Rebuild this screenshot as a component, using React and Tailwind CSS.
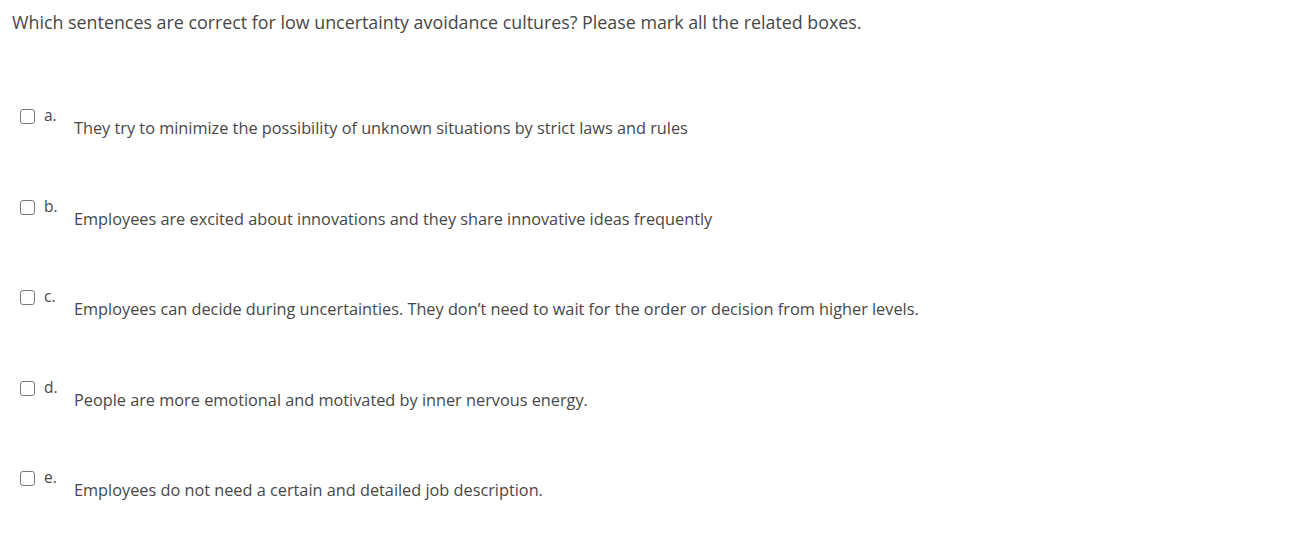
const options = [
  { key: "a.", text: "They try to minimize the possibility of unknown situations by strict laws and rules" },
  { key: "b.", text: "Employees are excited about innovations and they share innovative ideas frequently" },
  { key: "c.", text: "Employees can decide during uncertainties. They don’t need to wait for the order or decision from higher levels." },
  { key: "d.", text: "People are more emotional and motivated by inner nervous energy." },
  { key: "e.", text: "Employees do not need a certain and detailed job description." },
];

export default function App() {
  return (
    <div
      className="min-h-screen bg-white text-[#474747] pl-3 pt-[9px]"
      style={{ fontFamily: '"Open Sans", sans-serif' }}
    >
      <p className="text-[17.85px] leading-[26px]">
        Which sentences are correct for low uncertainty avoidance cultures? Please mark all the related boxes.
      </p>

      <div className="mt-[73px] flex flex-col gap-[64.5px] pl-[8px]">
        {options.map((o) => (
          <div key={o.key} className="flex items-start h-[26px]">
            <span className="mt-[1px] w-[15px] h-[15px] rounded-[3px] border-[1.5px] border-[#7a7a7a] bg-white shrink-0" />
            <span className="ml-[9px] w-[30px] text-[15.5px] leading-[16px] -mt-[1px]">{o.key}</span>
            <span className="mt-[10px] text-[16.3px] leading-5">{o.text}</span>
          </div>
        ))}
      </div>
    </div>
  );
}
